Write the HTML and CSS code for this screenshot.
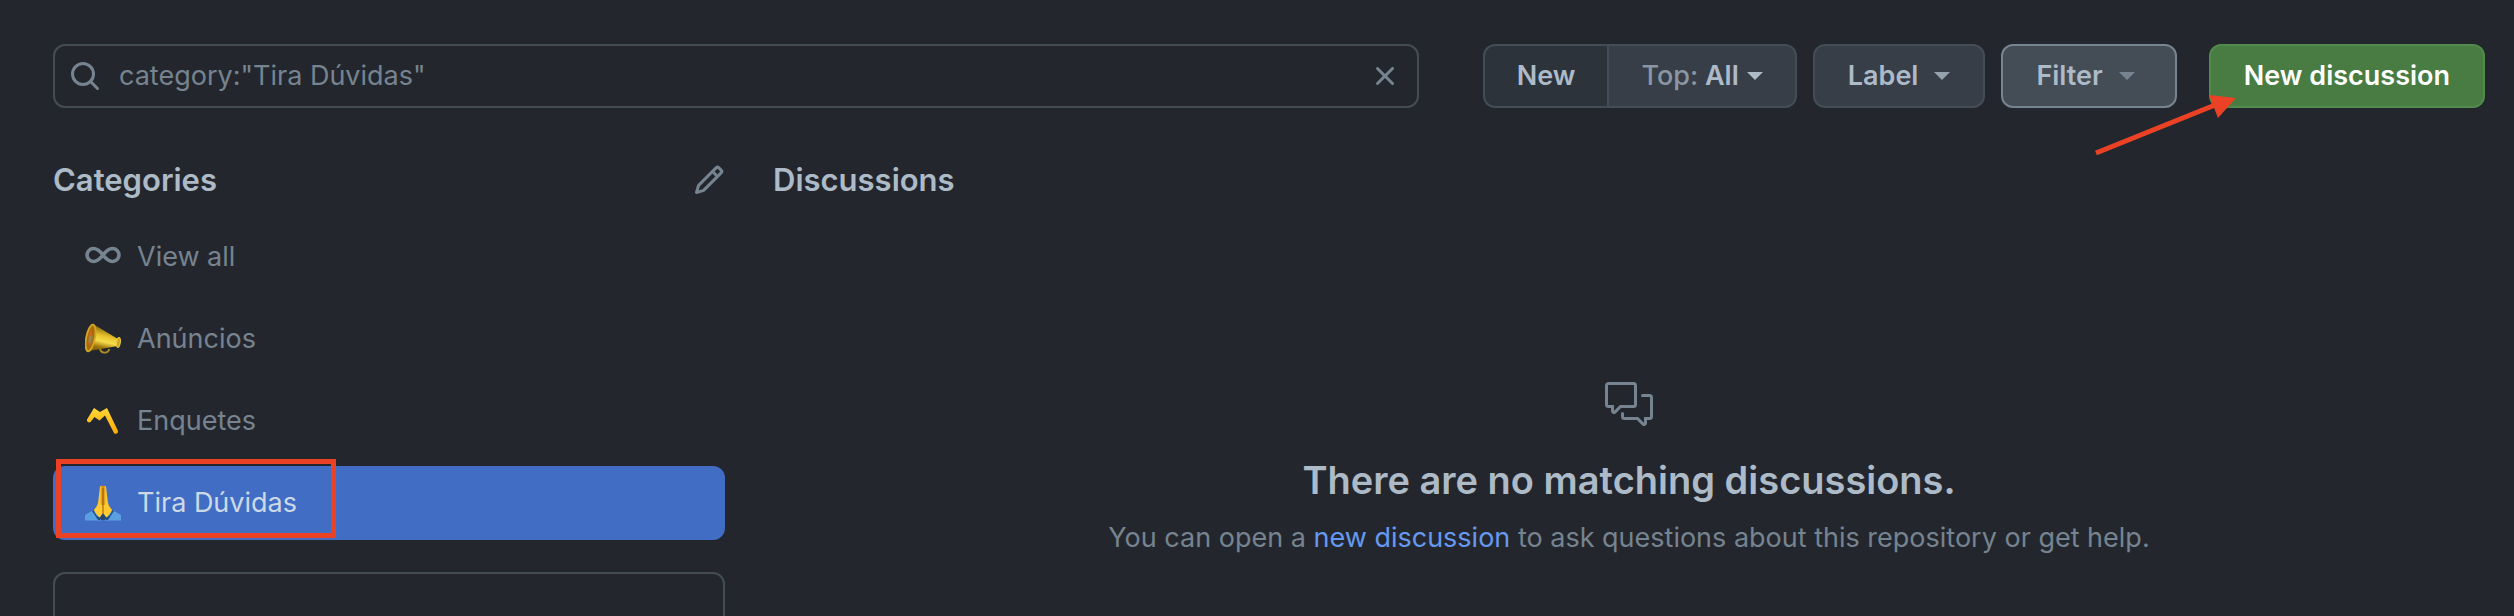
FILE: index.html
```html
<!DOCTYPE html>
<html lang="en">
<head>
<meta charset="utf-8">
<meta name="viewport" content="width=device-width, initial-scale=1">
<title>Discussions</title>
<link rel="stylesheet" href="styles.css">
</head>
<body>
<header class="toolbar">
  <form class="search" role="search">
    <svg class="icon" viewBox="0 0 16 16" aria-hidden="true"><g fill="none" stroke="#768390" stroke-width="1.500" stroke-linecap="round"><circle cx="7" cy="7" r="5.250"/><path d="M10.900 10.900 14.250 14.250"/></g></svg>
    <input class="search-input" type="text" aria-label="Search all discussions" value='category:"Tira Dúvidas"'>
    <button class="icon-button" type="reset" aria-label="Clear search">
      <svg class="icon" viewBox="0 0 16 16" aria-hidden="true"><path d="M3.72 3.72a.75.75 0 011.06 0L8 6.94l3.22-3.22a.75.75 0 111.06 1.06L9.06 8l3.22 3.22a.75.75 0 11-1.06 1.06L8 9.06l-3.22 3.22a.75.75 0 01-1.06-1.06L6.94 8 3.72 4.78a.75.75 0 010-1.06z"/></svg>
    </button>
  </form>
  <div class="actions">
    <div class="group">
      <button class="button button-new" type="button">New</button>
      <button class="button button-top" type="button"><span class="soft">Top:</span> All<span class="caret"></span></button>
    </div>
    <button class="button" type="button">Label<span class="caret caret-apart"></span></button>
    <button class="button button-filter" type="button">Filter<span class="caret caret-apart"></span></button>
    <div class="primary-wrap">
      <button class="button button-primary" type="button">New discussion</button>
      <svg class="arrow" viewBox="0 0 144 62" aria-hidden="true"><path d="M1 59 120 11" stroke="#eb4226" stroke-width="5"/><path d="M114 1l27 3-18 20z" fill="#eb4226"/></svg>
    </div>
  </div>
</header>
<div class="layout">
  <aside class="sidebar">
    <div class="sidebar-head">
      <h2 class="heading">Categories</h2>
      <button class="icon-button" type="button" aria-label="Edit categories">
        <svg class="icon" viewBox="0 0 16 16" aria-hidden="true"><path d="M11.013 1.427a1.75 1.75 0 012.474 0l1.086 1.086a1.75 1.75 0 010 2.474l-8.61 8.61c-.21.21-.47.364-.756.445l-3.251.93a.75.75 0 01-.927-.928l.929-3.25a1.75 1.75 0 01.445-.758l8.61-8.61zm1.414 1.06a.25.25 0 00-.354 0L10.811 3.75l1.439 1.44 1.263-1.263a.25.25 0 000-.354l-1.086-1.086zM11.189 6.25L9.75 4.81l-6.286 6.287a.25.25 0 00-.064.108l-.558 1.953 1.953-.558a.249.249 0 00.108-.064l6.286-6.286z"/></svg>
      </button>
    </div>
    <nav class="categories" aria-label="Categories">
      <a class="category" href="#all">
        <svg class="emoji" viewBox="0 0 36 36" aria-hidden="true"><path d="M18 16c-3-4-6-6.500-9.500-6.500a6.500 6.500 0 000 13c3.500 0 6.500-2.500 9.500-6.500s6-6.500 9.500-6.500a6.500 6.500 0 010 13c-3.500 0-6.500-2.500-9.500-6.500z" fill="none" stroke="#768390" stroke-width="3.600"/></svg>
        View all</a>
      <a class="category" href="#anuncios">
        <svg class="emoji" viewBox="0 0 36 36" aria-hidden="true">
          <defs><linearGradient id="horn" x1="0" y1="0" x2="-.25" y2="1"><stop offset="0" stop-color="#8a6a0c"/><stop offset=".3" stop-color="#e8c32c"/><stop offset=".5" stop-color="#f5dd4c"/><stop offset=".7" stop-color="#a57c0d"/><stop offset="1" stop-color="#5d4206"/></linearGradient></defs>
          <path d="M15 27c0 6 9 6 9 1" fill="none" stroke="#a98a25" stroke-width="2"/>
          <path d="M8 3l25 15v7L4 30z" fill="url(#horn)"/>
          <ellipse cx="5.500" cy="17" rx="4.300" ry="13.500" transform="rotate(11 5.500 17)" fill="#a9690f" stroke="#d3a621" stroke-width="1.800"/>
          <path d="M6 9c-3 4-3 12-2 16 3-3 4-11 2-16z" fill="#d7621c"/>
          <path d="M5 14l3 2-2 6-3-1z" fill="#8f8a4a"/>
          <ellipse cx="33.500" cy="21.500" rx="1.800" ry="5" transform="rotate(8 33.500 21.500)" fill="#c9a321" stroke="#ecd248"/>
        </svg>
        Anúncios</a>
      <a class="category" href="#enquetes">
        <svg class="emoji" viewBox="0 0 36 36" aria-hidden="true">
          <defs><linearGradient id="mark" x1="0" y1="0" x2="0" y2="1"><stop offset="0" stop-color="#ffd735"/><stop offset="1" stop-color="#fba908"/></linearGradient></defs>
          <path d="M2 16.500 9 5l6 4 7-4 11 23a2.300 2.300 0 01-4 2L20 12.500l-5.500 5L9.500 14l-4 5a2.300 2.300 0 01-3.500-2.500z" fill="url(#mark)"/>
        </svg>
        Enquetes</a>
      <a class="category category-active" href="#tira-duvidas" aria-current="page">
        <svg class="emoji" viewBox="0 0 36 36" aria-hidden="true">
          <defs><linearGradient id="hand" x1="0" y1="0" x2="1" y2="0"><stop offset="0" stop-color="#e58f09"/><stop offset=".35" stop-color="#ffd034"/><stop offset=".5" stop-color="#c97d10"/><stop offset=".65" stop-color="#ffd034"/><stop offset="1" stop-color="#e58f09"/></linearGradient></defs>
          <path d="M15 1.500c.5-1 2-1 3-.5 1-.5 2.500-.5 3 .5l1.500 13c.5 5 2 8 6 12l-6 8L18 28l-4.500 6.500-6-8c4-4 5.500-7 6-12z" fill="url(#hand)"/>
          <path d="M9 25c0 5 3 8 6 8l3-5 3 5c3 0 6-3 6-8l-4.500-5h-9z" fill="#ffc92f"/>
          <path d="M18 3v25" stroke="#ae680b" stroke-width="1.200"/>
          <path d="M18 28l-5 7h10z" fill="#23456f"/>
          <path d="M0 30 8.500 25l8 10.500H0zM36 30 27.500 25l-8 10.500H36z" fill="#5a9fe0"/>
          <path d="M7 26l2-1c1 5 4 7 7 8l-1 2h-2zM29 26l-2-1c-1 5-4 7-7 8l1 2h2z" fill="#1f4f8b"/>
        </svg>
        Tira Dúvidas
        <span class="highlight"></span></a>
    </nav>
    <section class="panel" aria-label="More"></section>
  </aside>
  <main class="main">
    <h2 class="heading">Discussions</h2>
    <div class="empty">
      <svg class="empty-icon" viewBox="0 0 24 24" aria-hidden="true"><path d="M1.750 1.750h12.500a1 1 0 011 1v9.500a1 1 0 01-1 1H7.750l-2.800 2.800a.7.7 0 01-1.200-.5v-2.300h-2a1 1 0 01-1-1v-9.500a1 1 0 011-1zM18.750 7.750h3.500a1 1 0 011 1v9.500a1 1 0 01-1 1h-2v2.300a.7.7 0 01-1.200.5l-2.800-2.800H9.750a1 1 0 01-1-1v-1.500"/></svg>
      <h3 class="empty-title">There are no matching discussions.</h3>
      <p class="empty-text">You can open a <a class="link" href="#new">new discussion</a> to ask questions about this repository or get help.</p>
    </div>
  </main>
</div>
</body>
</html>
```
FILE: styles.css
```css
* { box-sizing: border-box; }

body {
  display: flex;
  flex-direction: column;
  margin: 0;
  height: 100vh;
  padding: 44px 29px 0 53px;
  background: #23272d;
  color: #adbac7;
  font: 27px/44px Inter, "Liberation Sans", sans-serif;
}

h2, h3, p { margin: 0; }

button, input { font: inherit; color: inherit; }

.toolbar { display: flex; gap: 64px; }

.search {
  flex: 1;
  display: flex;
  align-items: center;
  gap: 18px;
  height: 64px;
  padding: 0 16px 0 14px;
  border: 2px solid #444c56;
  border-radius: 12px;
}

.search-input {
  flex: 1;
  min-width: 0;
  padding: 0;
  border: 0;
  outline: 0;
  background: none;
  color: #768390;
}

.icon { display: block; width: 32px; height: 32px; fill: #768390; }

.icon-button { padding: 0; border: 0; background: none; }

.actions { display: flex; gap: 16px; }

.group { display: flex; }

.button {
  display: flex;
  align-items: center;
  height: 64px;
  padding: 0 33px;
  border: 2px solid #444c56;
  border-radius: 12px;
  background: #373e47;
  font-weight: 600;
  white-space: pre;
}

.button-new {
  padding: 0 32px;
  border-right: 0;
  border-radius: 12px 0 0 12px;
  background: #2d333b;
}

.button-top { padding: 0 32px; border-radius: 0 12px 12px 0; }

.soft { color: #8a96a3; font-weight: 500; }

.button-filter { padding-right: 40px; border-color: #768390; background: #444c56; }

.button-primary {
  border-color: #52894d;
  background: #487c42;
  color: #fff;
}

.caret {
  margin-left: 8px;
  border: 8px solid transparent;
  border-top-color: currentColor;
  border-bottom: 0;
}

.caret-apart { margin-left: 16px; opacity: .8; }

.button-filter .caret { border-top-color: #768390; opacity: 1; }

.primary-wrap { position: relative; margin-left: 16px; }

.arrow {
  position: absolute;
  top: 50px;
  left: -114px;
  width: 144px;
  height: 62px;
  pointer-events: none;
}

.layout {
  flex: 1;
  min-height: 0;
  overflow: hidden;
  display: grid;
  grid-template-columns: 672px 1fr;
  gap: 48px;
  padding-top: 48px;
}

.sidebar-head {
  display: flex;
  align-items: center;
  justify-content: space-between;
  margin-bottom: 16px;
}

.heading { font-size: 31px; line-height: 48px; font-weight: 600; }

.categories { display: grid; gap: 8px; }

.category {
  position: relative;
  display: flex;
  align-items: center;
  gap: 16px;
  height: 74px;
  padding: 0 32px;
  border-radius: 12px;
  color: #768390;
  text-decoration: none;
}

.category-active { background: #416dc5; color: #cdd9e5; }

.emoji { width: 36px; height: 36px; }

.highlight {
  position: absolute;
  top: -7px;
  left: 3px;
  width: 280px;
  height: 79px;
  border: 5px solid #eb4226;
}

.panel {
  min-height: 160px;
  margin-top: 32px;
  border: 2px solid #444c56;
  border-radius: 12px;
}

.empty { padding-top: 176px; text-align: center; }

.empty-icon {
  display: block;
  width: 48px;
  height: 48px;
  margin: 0 auto 24px;
  fill: none;
  stroke: #768390;
  stroke-width: 1.5;
  stroke-linecap: round;
}

.empty-title { margin-bottom: 8px; font-size: 38px; line-height: 56px; font-weight: 600; }

.empty-text { color: #768390; }

.link { color: #6699f0; text-decoration: none; }
```
